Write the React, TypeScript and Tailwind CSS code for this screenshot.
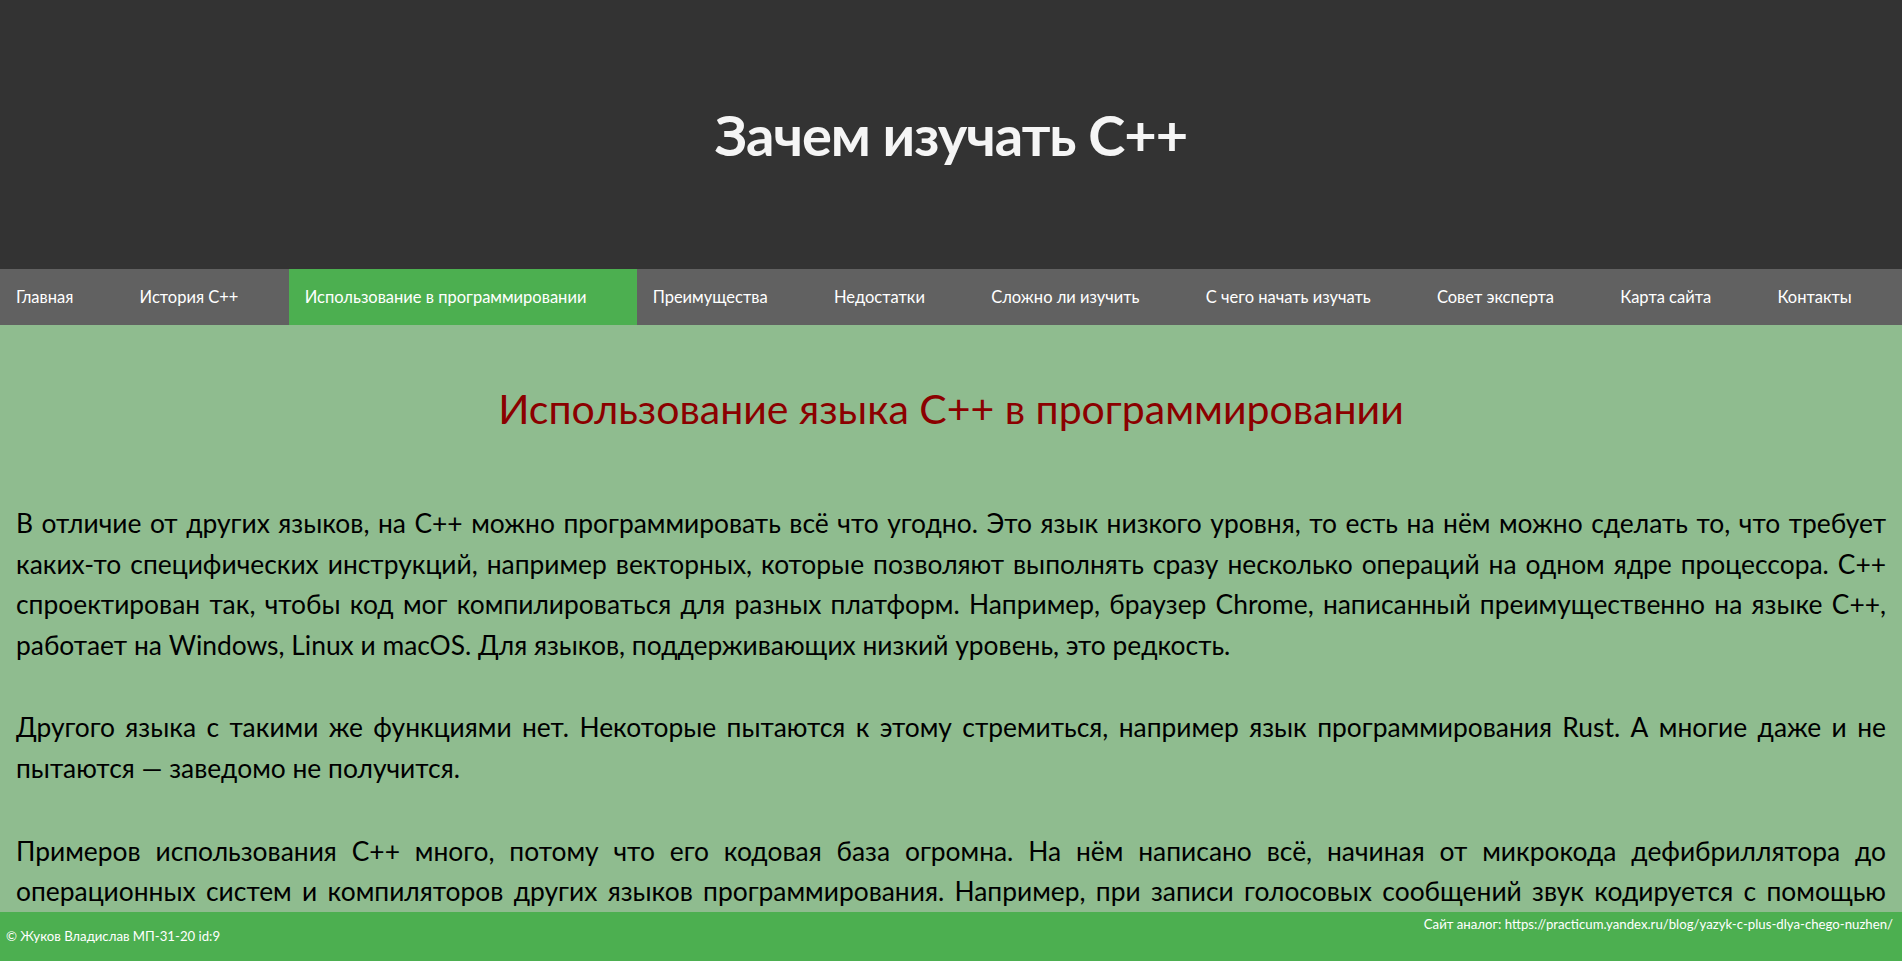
import React from "react";

const navItems = [
  "Главная",
  "История C++",
  "Использование в программировании",
  "Преимущества",
  "Недостатки",
  "Сложно ли изучить",
  "С чего начать изучать",
  "Совет эксперта",
  "Карта сайта",
  "Контакты",
];

export default function App() {
  return (
    <div className="h-screen flex flex-col overflow-hidden bg-[#8fbc8f] font-['Lato','Noto_Sans',sans-serif]">
      <header className="h-[269px] shrink-0 bg-[#333333] flex items-center justify-center">
        <h1 className="text-[56px] font-bold text-[#f5f5f5] leading-none tracking-[-1px]">Зачем изучать C++</h1>
      </header>
      <nav className="h-[56px] shrink-0 bg-[#616161] flex">
        {navItems.map((t, i) => (
          <a
            key={t}
            className={
              "flex-auto flex items-center pl-4 text-[16.5px] text-white whitespace-nowrap " +
              (i === 2 ? "bg-[#4caf50]" : "")
            }
          >
            {t}
          </a>
        ))}
      </nav>
      <main className="flex-1 min-h-0 overflow-hidden px-4 pt-[60px]">
        <h2 className="text-center text-[41px] leading-[48px] text-[#8b0000] mb-[70px]">
          Использование языка C++ в программировании
        </h2>
        <div className="text-[26.4px] leading-[40.6px] text-black text-justify">
          <p className="mb-[42px]">
            В отличие от других языков, на C++ можно программировать всё что угодно. Это язык низкого уровня, то есть на нём можно сделать то, что требует каких-то специфических инструкций, например векторных, которые позволяют выполнять сразу несколько операций на одном ядре процессора. C++ спроектирован так, чтобы код мог компилироваться для разных платформ. Например, браузер Chrome, написанный преимущественно на языке C++, работает на Windows, Linux и macOS. Для языков, поддерживающих низкий уровень, это редкость.
          </p>
          <p className="mb-[42px]">
            Другого языка с такими же функциями нет. Некоторые пытаются к этому стремиться, например язык программирования Rust. А многие даже и не пытаются — заведомо не получится.
          </p>
          <p className="mb-[42px]">
            Примеров использования C++ много, потому что его кодовая база огромна. На нём написано всё, начиная от микрокода дефибриллятора до операционных систем и компиляторов других языков программирования. Например, при записи голосовых сообщений звук кодируется с помощью библиотек, написанных на C++.
          </p>
        </div>
      </main>
      <footer className="h-[49px] shrink-0 bg-[#4caf50] text-white text-[13.2px] px-[6px] flex justify-between">
        <span className="self-center">© Жуков Владислав МП-31-20 id:9</span>
        <span className="pt-[3px] pr-[3px]">Сайт аналог: https://practicum.yandex.ru/blog/yazyk-c-plus-dlya-chego-nuzhen/</span>
      </footer>
    </div>
  );
}
